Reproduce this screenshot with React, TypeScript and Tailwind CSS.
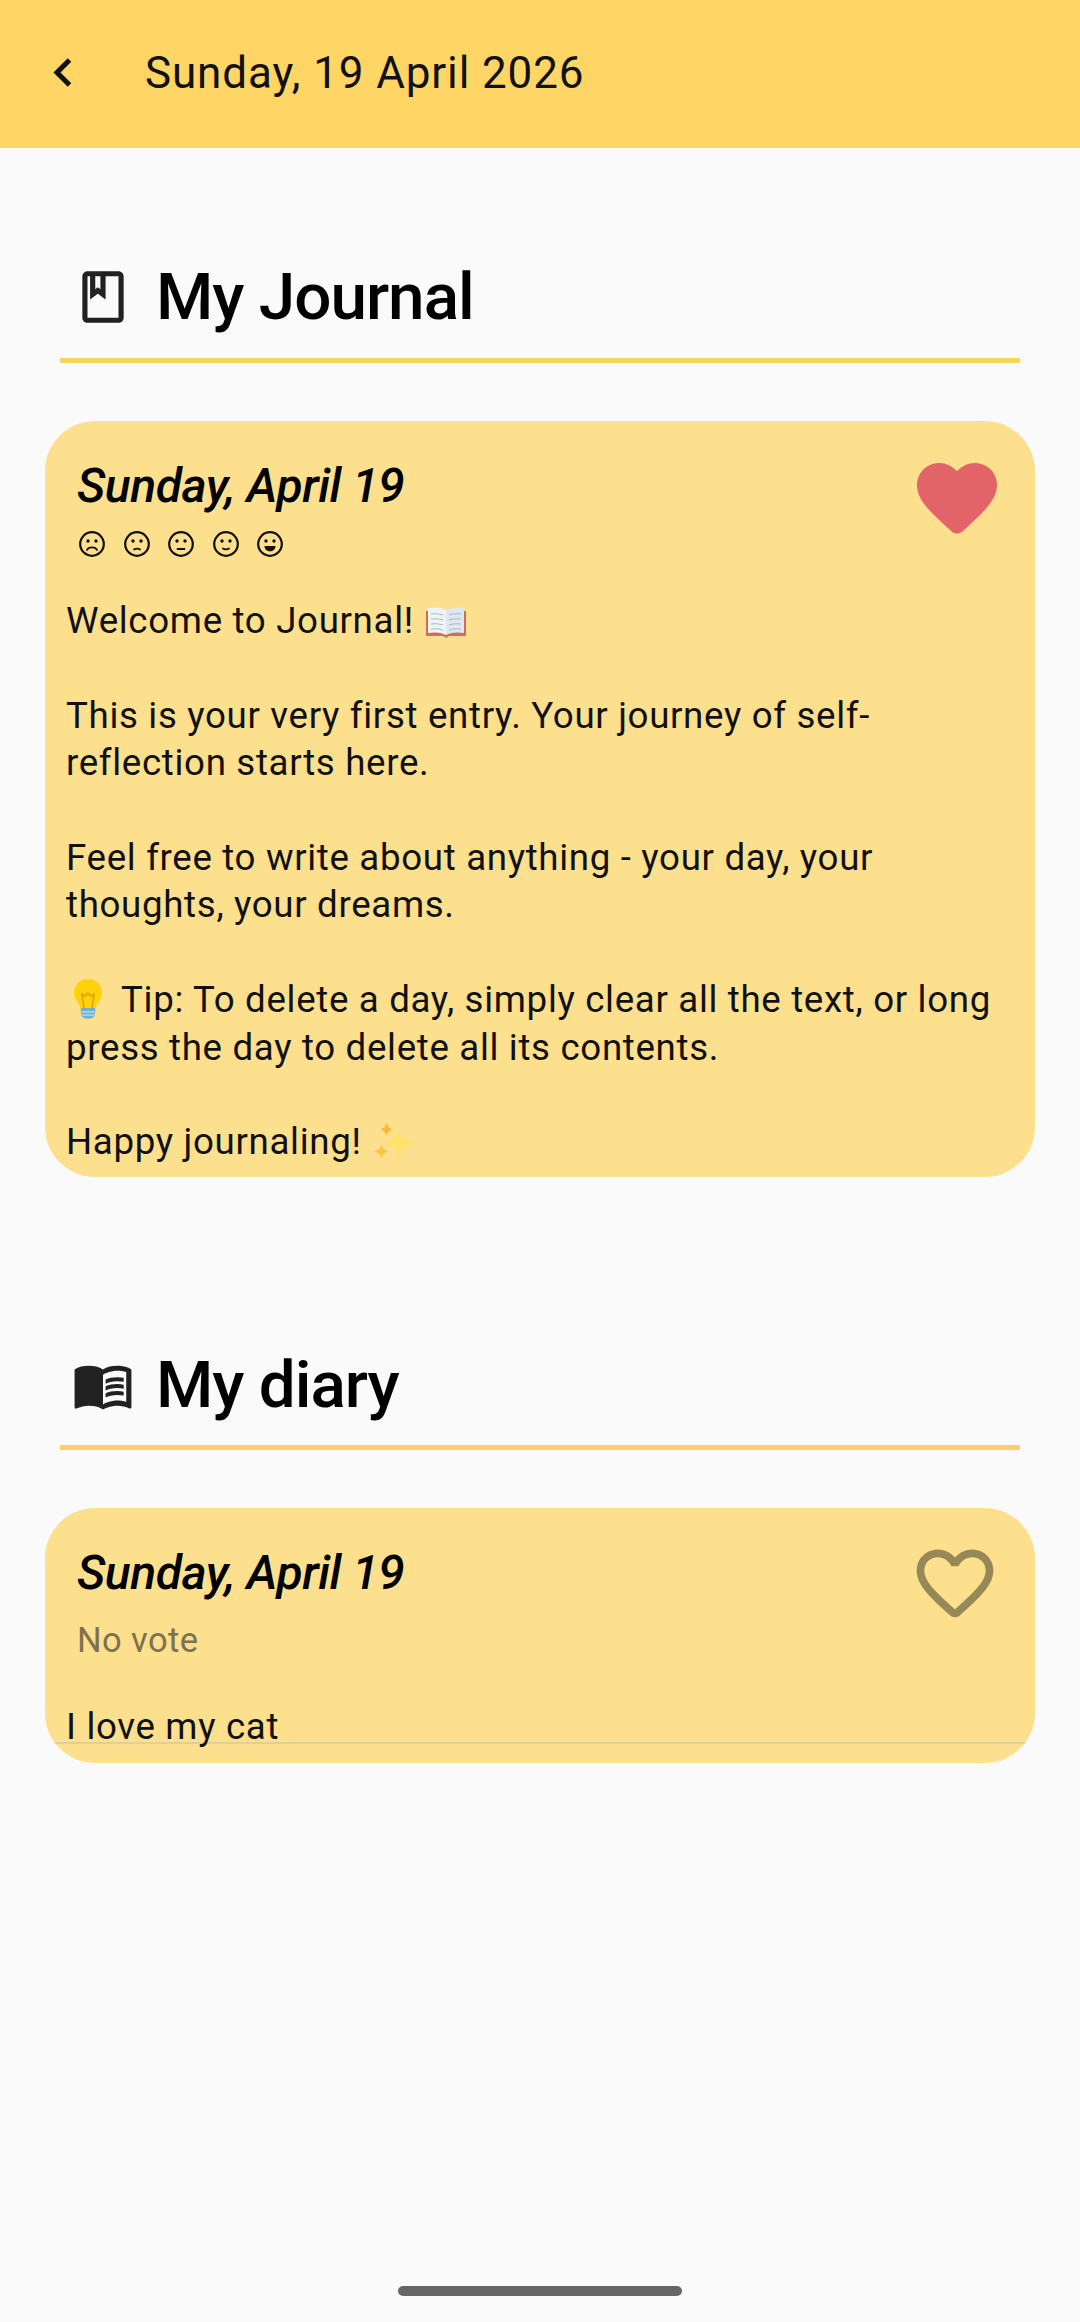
import type { ReactNode } from "react";

const HEART_FILLED =
    "M13.35 20.13c-.76.69-1.93.69-2.69-.01l-.11-.1C5.3 15.27 1.87 12.16 2 8.28c.06-1.7.93-3.33 2.34-4.29 2.64-1.8 5.9-.96 7.66 1.1 1.76-2.06 5.02-2.91 7.66-1.1 1.41.96 2.28 2.59 2.34 4.29.14 3.88-3.3 6.99-8.55 11.76l-.1.09z";
const HEART_OUTLINE =
    "M19.66 3.99c-2.64-1.8-5.9-.96-7.66 1.1-1.76-2.06-5.02-2.91-7.66-1.1-1.4.96-2.28 2.58-2.34 4.29-.14 3.88 3.3 6.99 8.55 11.76l.1.09c.76.69 1.93.69 2.69-.01l.11-.1c5.25-4.76 8.68-7.87 8.55-11.75-.06-1.7-.94-3.32-2.34-4.28zM12.1 18.55l-.1.1-.1-.1C7.14 14.24 4 11.39 4 8.5 4 6.5 5.5 5 7.5 5c1.54 0 3.04.99 3.57 2.36h1.87C13.46 5.99 14.96 5 16.5 5c2 0 3.5 1.5 3.5 3.5 0 2.89-3.14 5.74-7.9 10.05z";

function BookIcon() {
    return (
        <svg viewBox="0 0 24 24" className="h-[62px] w-[62px] shrink-0" fill="#212121">
            <path d="M18 2H6c-1.1 0-2 .9-2 2v16c0 1.1.9 2 2 2h12c1.1 0 2-.9 2-2V4c0-1.1-.9-2-2-2zM9 4h2v5l-1-.75L9 9V4zm9 16H6V4h1v9l3-2.25L13 13V4h5v16z" />
        </svg>
    );
}

function MenuBookIcon() {
    return (
        <svg viewBox="0 0 24 24" className="h-[62px] w-[62px] shrink-0" fill="#212121">
            <path d="M21 5c-1.11-.35-2.33-.5-3.5-.5-1.95 0-4.05.4-5.5 1.5-1.45-1.1-3.55-1.5-5.5-1.5S2.45 4.9 1 6v14.65c0 .25.25.5.5.5.1 0 .15-.05.25-.05C3.1 20.45 5.05 20 6.5 20c1.95 0 4.05.4 5.5 1.5 1.35-.85 3.8-1.5 5.5-1.5 1.65 0 3.35.3 4.75 1.05.1.05.15.05.25.05.25 0 .5-.25.5-.5V6c-.6-.45-1.25-.75-2-1zm0 13.5c-1.1-.35-2.3-.5-3.5-.5-1.7 0-4.15.65-5.5 1.5V8c1.35-.85 3.8-1.5 5.5-1.5 1.2 0 2.4.15 3.5.5v11.5z" />
            <path d="M17.5 10.5c.88 0 1.73.09 2.5.26V9.24c-.79-.15-1.64-.24-2.5-.24-1.7 0-3.24.29-4.5.83v1.66c1.13-.64 2.7-.99 4.5-.99zM13 12.49v1.66c1.13-.64 2.7-.99 4.5-.99.88 0 1.73.09 2.5.26V11.9c-.79-.15-1.64-.24-2.5-.24-1.7 0-3.24.3-4.5.83zM17.5 14.33c-1.7 0-3.24.29-4.5.83v1.66c1.13-.64 2.7-.99 4.5-.99.88 0 1.73.09 2.5.26v-1.52c-.79-.16-1.64-.24-2.5-.24z" />
        </svg>
    );
}

function OpenBookEmoji() {
    return (
        <svg viewBox="0 0 42 32" className="ml-[11px] inline-block h-[32px] w-[42px] align-[-5px]">
            <path d="M1 5h40v25H24l-3 2-3-2H1z" fill="#d9695b" />
            <path d="M3 2c6-1 13-1 18 2v25c-5-3-12-3-18-2z" fill="#eef3f6" />
            <path d="M39 2c-6-1-13-1-18 2v25c5-3 12-3 18-2z" fill="#dfe8ee" />
            <path d="M6 8c4-.5 8-.3 12 1M6 13c4-.5 8-.3 12 1M6 18c4-.5 8-.3 12 1M6 23c4-.5 8-.3 12 1M36 8c-4-.5-8-.3-12 1M36 13c-4-.5-8-.3-12 1M36 18c-4-.5-8-.3-12 1M36 23c-4-.5-8-.3-12 1" stroke="#a9bcc8" strokeWidth="1.2" fill="none" />
        </svg>
    );
}

function BulbEmoji() {
    return (
        <svg viewBox="0 0 30 42" className="ml-[7px] mr-[18px] inline-block h-[42px] w-[30px] align-[-8px]">
            <path d="M15 1C7 1 1 7 1 15c0 7 6 10 7 17h14c1-7 7-10 7-17 0-8-6-14-14-14z" fill="#fdd20a" />
            <path d="M11 30l-2-14 3 2 3-3 3 3 3-2-2 14" stroke="#d99e0b" strokeWidth="1.4" fill="none" />
            <path d="M8 30h14c1 4 0 9-3 10-2 1-6 1-8 0-3-1-4-6-3-10z" fill="#6fb1d6" />
            <path d="M8 34h14M9 37h12" stroke="#d8e6ee" strokeWidth="1.2" />
        </svg>
    );
}

function SparklesEmoji() {
    return (
        <svg viewBox="0 0 42 40" className="ml-[11px] inline-block h-[42px] w-[44px] align-[-9px]">
            <path d="M25 7c2 9 6 12 16 14-10 2-14 5-16 14-2-9-6-12-15-14 9-2 13-5 15-14z" fill="#fde26b" />
            <path d="M13 1c1 4 2 6 6 7-4 1-5 3-6 7-1-4-2-6-6-7 4-1 5-3 6-7z" fill="#f9b93a" />
            <path d="M8 22c1 4 3 6 7 7-4 1-6 3-7 7-1-4-3-6-7-7 4-1 6-3 7-7z" fill="#fbc646" />
        </svg>
    );
}

// the five vote faces, worst to best
const MOUTHS = [
    "M8 19c1.5-3.5 8.5-3.5 10 0",
    "M10 18.5c1.5-1.2 4.500-1.200 6 0",
    "M9.500 18h7",
    "M10 17.500c1.500 1.200 4.500 1.200 6 0",
];

function MoodFaces() {
    return (
        <div className="flex gap-[18.500px] pl-[34px]">
            {[0, 1, 2, 3, 4].map((i) => (
                <svg key={i} viewBox="0 0 26 26" className="h-[26px] w-[26px]">
                    <circle cx="13" cy="13" r="11.800" fill="none" stroke="#111" strokeWidth="2.200" />
                    <circle cx="9" cy="10" r="1.700" fill="#111" />
                    <circle cx="17" cy="10" r="1.700" fill="#111" />
                    {i < 4 ? (
                        <path d={MOUTHS[i]} fill="none" stroke="#111" strokeWidth="1.800" strokeLinecap="round" />
                    ) : (
                        <path d="M7.500 15h11c0 7-11 7-11 0z" fill="#111" />
                    )}
                </svg>
            ))}
        </div>
    );
}

interface SectionHeadingProps {
    icon: ReactNode;
    title: string;
    className: string;
}

function SectionHeading({ icon, title, className }: SectionHeadingProps) {
    return (
        <div className={`mx-[15px] border-b-[5px] border-[#fbd15f] ${className}`}>
            <div className="flex h-[78px] items-center gap-[22px] pl-[12px]">
                {icon}
                <h2 className="text-[65.600px] font-medium leading-[78px] tracking-[-1px] text-black">{title}</h2>
            </div>
        </div>
    );
}

interface EntryCardProps {
    heart: ReactNode;
    mood: ReactNode;
    children: ReactNode;
    className: string;
}

function EntryCard({ heart, mood, children, className }: EntryCardProps) {
    return (
        <div className={`relative overflow-hidden rounded-[50px] bg-[#fde08d] ${className}`}>
            {heart}
            <p className="pl-[32px] pt-[38px] text-[48px] font-medium italic leading-[54px] tracking-[-0.45px] text-black">
                Sunday, April 19
            </p>
            {mood}
            {children}
        </div>
    );
}

export default function App() {
    return (
        <div className="flex min-h-[2322px] flex-col bg-[#fafafa] font-['Roboto',sans-serif]">
            <header className="flex h-[148px] items-center bg-[#ffd666] pb-[3px] pl-[53px]">
                <svg viewBox="0 0 19 31" className="h-[31px] w-[19px]">
                    <path d="M16.500 3L4 15.500 16.500 28" fill="none" stroke="#111" strokeWidth="5" />
                </svg>
                <h1 className="ml-[73px] text-[44px] leading-[56px] tracking-[0.87px] text-[#111]">
                    Sunday, 19 April 2026
                </h1>
            </header>

            <main className="flex-1 px-[45px]">
                <SectionHeading icon={<BookIcon />} title="My Journal" className="mt-[110px] pb-[22px]" />
                <EntryCard
                    className="mt-[58px] h-[756px]"
                    heart={
                        <svg viewBox="0 0 24 24" className="absolute right-[30px] top-[30px] h-[96px] w-[96px]" fill="#e26368">
                            <path d={HEART_FILLED} />
                        </svg>
                    }
                    mood={
                        <div className="pt-[18px]">
                            <MoodFaces />
                        </div>
                    }
                >
                    <div className="pl-[21px] pr-[30px] pt-[40px] text-[36.700px] leading-[47.400px] tracking-[0.66px] text-[#111]">
                        Welcome to Journal!
                        <OpenBookEmoji />
                        <br />
                        <br />
                        This is your very first entry. Your journey of self-reflection starts here.
                        <br />
                        <br />
                        Feel free to write about anything - your day, your thoughts, your dreams.
                        <br />
                        <br />
                        <BulbEmoji />
                        Tip: To delete a day, simply clear all the text, or long press the day to delete all its
                        contents.
                        <br />
                        <br />
                        Happy journaling!
                        <SparklesEmoji />
                    </div>
                </EntryCard>

                <SectionHeading icon={<MenuBookIcon />} title="My diary" className="mt-[169px] pb-[21px]" />
                <EntryCard
                    className="mt-[58px] h-[255px]"
                    heart={
                        <svg viewBox="0 0 24 24" className="absolute right-[34px] top-[30px] h-[92px] w-[92px]" fill="#978857">
                            <path d={HEART_OUTLINE} />
                        </svg>
                    }
                    mood={<p className="pl-[32px] pt-[20px] text-[34.500px] leading-[40px] tracking-[0.4px] text-[#7d7150]">No vote</p>}
                >
                    <div className="mt-[43px] h-[41px] border-b-2 border-[#d9cfa8] pl-[21px] text-[36.700px] leading-[47.400px] tracking-[0.66px] text-[#111]">
                        I love my cat
                    </div>
                </EntryCard>
            </main>

            <div className="mx-auto mb-[26px] h-[10px] w-[284px] rounded-full bg-[#666666]" />
        </div>
    );
}
